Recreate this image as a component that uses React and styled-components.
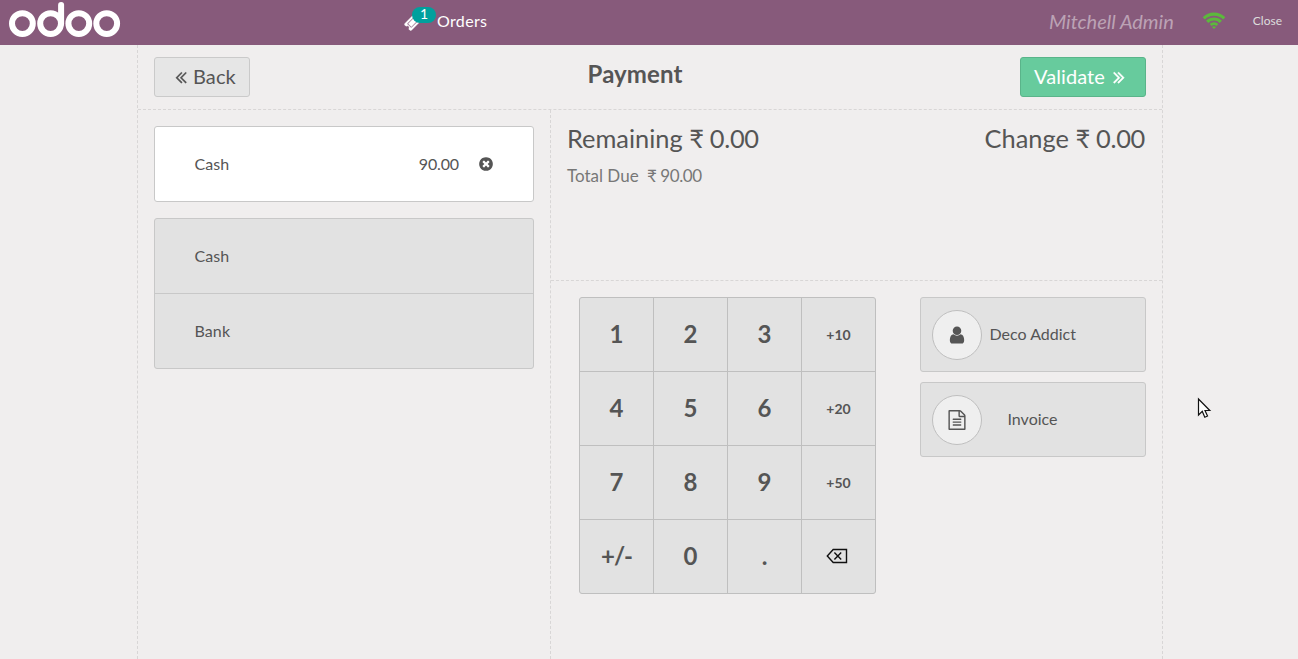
import React from 'react';
import styled, { createGlobalStyle } from 'styled-components';

const GlobalStyle = createGlobalStyle`
  * { box-sizing: border-box; }
  body {
    margin: 0;
    overflow: hidden;
    background: #f0eeee;
    color: #555;
    font-family: Lato, "Liberation Sans", sans-serif;
    font-size: 16px;
  }
`;

const PATHS = {
  ticket:
    'M1024 452l316 316-572 572-316-316zm-211 979l618-618q19-19 19-45t-19-45l-362-362q-18-18-45-18t-45 18l-618 618q-19 19-19 45t19 45l362 362q18 18 45 18t45-18zm889-637l-907 908q-37 37-90.5 37t-90.5-37l-126-126q56-56 56-136t-56-136-136-56-136 56l-125-126q-37-37-37-90.5t37-90.5l907-906q37-37 90.5-37t90.5 37l125 125q-56 56-56 136t56 136 136 56 136-56l126 125q37 37 37 90.5t-37 90.5z',
  remove:
    'M1277 1122q0-26-19-45l-181-181 181-181q19-19 19-45 0-27-19-46l-90-90q-19-19-46-19-26 0-45 19l-181 181-181-181q-19-19-45-19-27 0-46 19l-90 90q-19 19-19 46 0 26 19 45l181 181-181 181q-19 19-19 45 0 27 19 46l90 90q19 19 46 19 26 0 45-19l181-181 181 181q19 19 45 19 27 0 46-19l90-90q19-19 19-46zm387-226q0 209-103 385.5t-279.5 279.5-385.5 103-385.5-103-279.5-279.5-103-385.5 103-385.5 279.5-279.5 385.5-103 385.5 103 279.5 279.5 103 385.5z',
  user:
    'M1536 1399q0 109-62.5 187t-150.5 78h-854q-88 0-150.5-78t-62.5-187q0-85 8.5-160.5t31.5-152 58.5-131 94-89 134.5-34.5q131 128 313 128t313-128q76 0 134.5 34.5t94 89 58.5 131 31.5 152 8.5 160.5zm-256-887q0 159-112.5 271.5t-271.5 112.5-271.5-112.5-112.5-271.5 112.5-271.5 271.5-112.5 271.5 112.5 112.5 271.5z',
  invoice:
    'M1596 380q28 28 48 76t20 88v1152q0 40-28 68t-68 28h-1344q-40 0-68-28t-28-68v-1600q0-40 28-68t68-28h896q40 0 88 20t76 48zm-444-244v376h376q-10-29-22-41l-313-313q-12-12-41-22zm384 1528v-1024h-416q-40 0-68-28t-28-68v-416h-768v1536h1280zm-1024-864q0-14 9-23t23-9h704q14 0 23 9t9 23v64q0 14-9 23t-23 9h-704q-14 0-23-9t-9-23v-64zm736 224q14 0 23 9t9 23v64q0 14-9 23t-23 9h-704q-14 0-23-9t-9-23v-64q0-14 9-23t23-9h704zm0 256q14 0 23 9t9 23v64q0 14-9 23t-23 9h-704q-14 0-23-9t-9-23v-64q0-14 9-23t23-9h704z',
  right:
    'M979 960q0 13-10 23l-466 466q-10 10-23 10t-23-10l-50-50q-10-10-10-23t10-23l393-393-393-393q-10-10-10-23t10-23l50-50q10-10 23-10t23 10l466 466q10 10 10 23zm384 0q0 13-10 23l-466 466q-10 10-23 10t-23-10l-50-50q-10-10-10-23t10-23l393-393-393-393q-10-10-10-23t10-23l50-50q10-10 23-10t23 10l466 466q10 10 10 23z',
  left:
    'M1011 1376q0 13-10 23l-50 50q-10 10-23 10t-23-10l-466-466q-10-10-10-23t10-23l466-466q10-10 23-10t23 10l50 50q10 10 10 23t-10 23l-393 393 393 393q10 10 10 23zm384 0q0 13-10 23l-50 50q-10 10-23 10t-23-10l-466-466q-10-10-10-23t10-23l466-466q10-10 23-10t23 10l50 50q10 10 10 23t-10 23l-393 393 393 393q10 10 10 23z',
};

const IconSvg = styled.svg`
  display: block;
  flex: none;
  width: ${(p) => p.$size}px;
  height: ${(p) => p.$size}px;
  fill: currentColor;
  stroke: currentColor;
  stroke-width: ${(p) => p.$weight || 0};
`;

const Icon = ({ name, size, weight }) => (
  <IconSvg $size={size} $weight={weight} viewBox="0 0 1792 1792">
    <path d={PATHS[name]} />
  </IconSvg>
);

const TopBar = styled.header`
  display: flex;
  align-items: center;
  height: 45px;
  background: #875a7b;
  color: #fff;
`;

const Logo = styled.svg`
  display: block;
  width: 130px;
  height: 45px;
`;

const OrdersButton = styled.div`
  position: relative;
  display: flex;
  align-items: center;
  height: 45px;
  margin-left: 274px;
  padding-bottom: 1px;
  line-height: 20px;
`;

const OrdersLabel = styled.span`
  margin-left: 16px;
  padding-bottom: 2px;
  letter-spacing: 0.35px;
`;

const OrdersBadge = styled.span`
  position: absolute;
  left: 8px;
  top: 7px;
  width: 24px;
  height: 16px;
  border-radius: 8px;
  background: #00a09d;
  font-size: 14px;
  line-height: 14px;
  text-align: center;
`;

const UserName = styled.span`
  margin-left: auto;
  padding-bottom: 3px;
  color: rgba(255, 255, 255, 0.45);
  font-size: 20px;
  font-style: italic;
`;

const Wifi = styled.svg`
  display: block;
  width: 24px;
  height: 18px;
  margin: 0 0.5px 5px 28.5px;
`;

const CloseButton = styled.span`
  margin: 0 16px 4px 26px;
  color: #ddd;
  font-size: 12px;
`;

const Screen = styled.main`
  display: flex;
  flex-direction: column;
  width: 1026px;
  height: 614px;
  margin-left: 137px;
  border: dashed #d8d6d6;
  border-width: 0 1px;
`;

const ScreenHeader = styled.div`
  display: flex;
  justify-content: space-between;
  height: 65px;
  padding: 12px 16px 0;
  border-bottom: 1px dashed #d8d6d6;
`;

const Title = styled.h1`
  margin: 0;
  font-size: 24px;
  font-weight: 700;
  line-height: 34px;
  letter-spacing: 0.1px;
`;

const HeaderButton = styled.button`
  display: flex;
  align-items: center;
  width: ${(p) => p.$width}px;
  height: 40px;
  padding: 0 13px 0 ${(p) => (p.$primary ? 13 : 16)}px;
  border: 1px solid ${(p) => (p.$primary ? '#5ab48a' : '#cacaca')};
  border-radius: 3px;
  background: ${(p) => (p.$primary ? '#67cb9d' : '#e6e6e6')};
  color: ${(p) => (p.$primary ? '#fff' : '#555')};
  font: 20px Lato, "Liberation Sans", sans-serif;
`;

const HeaderButtonLabel = styled.span`
  padding-bottom: 2px;
  margin: ${(p) => (p.$primary ? '0 4px 0 0' : '0 0 0 2px')};
  letter-spacing: 0.1px;
`;

const Content = styled.div`
  display: flex;
  flex: 1;
`;

const PaymentColumn = styled.section`
  width: 412px;
  padding: 16px;
`;

const MethodList = styled.div`
  margin-bottom: 16px;
  border: 1px solid #c8c8c8;
  border-radius: 3px;
  background: ${(p) => (p.$selected ? '#fff' : '#e2e2e2')};
`;

const MethodRow = styled.div`
  display: flex;
  align-items: center;
  height: ${(p) => (p.$divided ? 75 : 74)}px;
  padding: 0 39px 0 39.5px;
  border-bottom: ${(p) => (p.$divided ? '1px solid #c8c8c8' : 'none')};
`;

const MethodName = styled.span`
  padding-bottom: 2px;
  letter-spacing: 0.1px;
`;

const Amount = styled.span`
  margin: 0 19px 0 auto;
  padding-bottom: 2px;
  letter-spacing: -0.15px;
`;

const DetailColumn = styled.section`
  flex: 1;
  border-left: 1px dashed #d8d6d6;
`;

const Summary = styled.div`
  display: flex;
  justify-content: space-between;
  height: 171px;
  padding: 11px 17px 12px 16px;
  border-bottom: 1px dashed #d8d6d6;
`;

const Balance = styled.div`
  font-size: 25.4px;
  line-height: 34px;
`;

const Figure = styled.span`
  letter-spacing: ${(p) => p.$tighten}px;
`;

const TotalDue = styled.div`
  margin-top: 8px;
  color: #777;
  font-size: 17px;
  line-height: 26px;
  white-space: pre;
`;

const Controls = styled.div`
  display: flex;
  justify-content: space-between;
  align-items: flex-start;
  padding: 16px 16px 0 28px;
`;

const Numpad = styled.div`
  display: grid;
  grid-template-columns: repeat(4, 73px);
  grid-auto-rows: 73px;
  gap: 1px;
  overflow: hidden;
  border: 1px solid #bfbfbf;
  border-radius: 3px;
  background: #bfbfbf;
`;

const Key = styled.button`
  display: flex;
  align-items: center;
  justify-content: center;
  padding: 0 0 ${(p) => (p.$small ? 0 : 2)}px;
  border: 0;
  background: #e2e2e2;
  color: #555;
  font: 700 ${(p) => (p.$small ? 14 : 24)}px Lato, "Liberation Sans", sans-serif;
  letter-spacing: ${(p) => (p.$tight ? -1 : 0)}px;
`;

const Backspace = styled.svg`
  display: block;
  width: 22px;
  height: 16px;
  margin: 0 3px 0 0;
`;

const Options = styled.div`
  display: flex;
  flex-direction: column;
  gap: 10px;
  width: 226px;
`;

const OptionButton = styled.button`
  display: flex;
  align-items: center;
  height: 75px;
  padding: 0 11px;
  border: 1px solid #c8c8c8;
  border-radius: 3px;
  background: #e2e2e2;
  color: #555;
  font: 16px Lato, "Liberation Sans", sans-serif;
`;

const OptionIcon = styled.span`
  display: flex;
  align-items: center;
  justify-content: center;
  width: 50px;
  height: 50px;
  margin-top: 1px;
  border: 1px solid #bfbfbf;
  border-radius: 50%;
  background: #efefef;
`;

const OptionLabel = styled.span`
  width: 86px;
  margin-left: 7.5px;
  padding-bottom: 2px;
  text-align: center;
  white-space: nowrap;
`;

const Pointer = styled.svg`
  position: absolute;
  left: 1196px;
  top: 397px;
  width: 18px;
  height: 24px;
`;

const KEYS = ['1', '2', '3', '+10', '4', '5', '6', '+20', '7', '8', '9', '+50', '+/-', '0', '.'];

export default function App() {
  return (
    <>
      <GlobalStyle />
      <TopBar>
        <Logo viewBox="0 0 130 45" fill="none" stroke="#fff" strokeWidth="6">
          <circle cx="22.4" cy="23.6" r="10.4" />
          <circle cx="50.6" cy="23.6" r="10.4" />
          <circle cx="78.8" cy="23.6" r="10.4" />
          <circle cx="106.7" cy="23.6" r="10.4" />
          <path d="M61.1 5v18.6" strokeLinecap="round" />
        </Logo>
        <OrdersButton>
          <Icon name="ticket" size={17} weight={40} />
          <OrdersBadge>1</OrdersBadge>
          <OrdersLabel>Orders</OrdersLabel>
        </OrdersButton>
        <UserName>Mitchell Admin</UserName>
        <Wifi viewBox="0 0 24 18" fill="none" stroke="#5cb93c" strokeWidth="3.2">
          <path d="M1.8 7.3a14.4 14.4 0 0 1 20.4 0" />
          <path d="M5.2 10.8a9.6 9.6 0 0 1 13.6 0" />
          <path d="M8.6 14.1a4.8 4.8 0 0 1 6.8 0" strokeWidth="2.8" />
          <path d="M12 18l-2-2q2-1.4 4 0z" fill="#5cb93c" stroke="none" />
        </Wifi>
        <CloseButton>Close</CloseButton>
      </TopBar>
      <Screen>
        <ScreenHeader>
          <HeaderButton $width={96}>
            <Icon name="left" size={20} weight={15} />
            <HeaderButtonLabel>Back</HeaderButtonLabel>
          </HeaderButton>
          <Title>Payment</Title>
          <HeaderButton $width={126} $primary>
            <HeaderButtonLabel $primary>Validate</HeaderButtonLabel>
            <Icon name="right" size={20} weight={35} />
          </HeaderButton>
        </ScreenHeader>
        <Content>
          <PaymentColumn>
            <MethodList $selected>
              <MethodRow>
                <MethodName>Cash</MethodName>
                <Amount>90.00</Amount>
                <Icon name="remove" size={16} />
              </MethodRow>
            </MethodList>
            <MethodList>
              <MethodRow $divided><MethodName>Cash</MethodName></MethodRow>
              <MethodRow><MethodName>Bank</MethodName></MethodRow>
            </MethodList>
          </PaymentColumn>
          <DetailColumn>
            <Summary>
              <div>
                <Balance>Remaining <Figure $tighten={-0.3}>₹ 0.00</Figure></Balance>
                <TotalDue>{'Total Due '}<Figure $tighten={-0.4}>{' ₹ 90.00'}</Figure></TotalDue>
              </div>
              <Balance>Change <Figure $tighten={-0.3}>₹ 0.00</Figure></Balance>
            </Summary>
            <Controls>
              <Numpad>
                {KEYS.map((k) => (
                  <Key key={k} $small={/^\+\d/.test(k)} $tight={k === '+/-'}>{k}</Key>
                ))}
                <Key>
                  <Backspace viewBox="0 0 22 16" fill="none" stroke="#111" strokeWidth="1.4">
                    <path d="M7.2 1.5H20.5V14.5H7.2L1.3 8z" />
                    <path d="M8.4 4.6l6.8 6.8M15.2 4.6L8.4 11.4" />
                  </Backspace>
                </Key>
              </Numpad>
              <Options>
                <OptionButton>
                  <OptionIcon><Icon name="user" size={20} /></OptionIcon>
                  <OptionLabel>Deco Addict</OptionLabel>
                </OptionButton>
                <OptionButton>
                  <OptionIcon><Icon name="invoice" size={20} /></OptionIcon>
                  <OptionLabel>Invoice</OptionLabel>
                </OptionButton>
              </Options>
            </Controls>
          </DetailColumn>
        </Content>
      </Screen>
      <Pointer viewBox="0 0 18 24">
        <path d="M2.5 2v16l3.8-3.6 2.5 5.8 2.7-1.2-2.5-5.5h4.8z" fill="#fff" stroke="#111" strokeWidth="1.2" />
      </Pointer>
    </>
  );
}
